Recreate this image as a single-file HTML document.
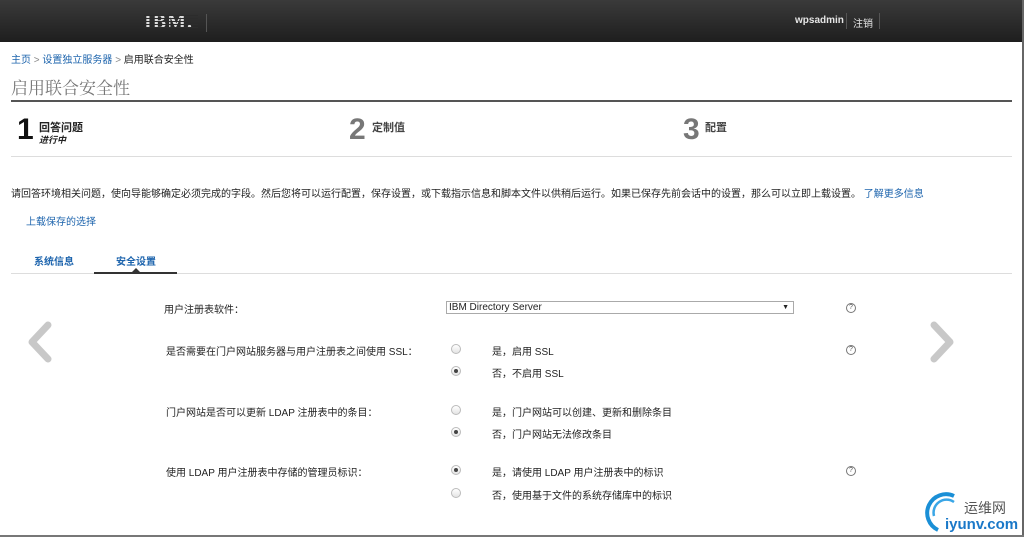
<!DOCTYPE html>
<html><head><meta charset="utf-8"><style>
*{margin:0;padding:0;box-sizing:border-box}
body{width:1028px;height:539px;background:#fff;font-family:"Liberation Sans","Noto Sans CJK SC",sans-serif;font-size:11px;color:#222;position:relative;overflow:hidden}
.a{position:absolute;white-space:nowrap}
.hdr{left:0;top:0;width:1022px;height:42px;background:linear-gradient(#3a3a3a,#1e1e1e)}
.blue{color:#1d64ad}
.radio{width:10px;height:10px;border-radius:50%;border:1px solid #bbb;background:linear-gradient(#fff,#e4e4e4)}
.radio.on::after{content:"";position:absolute;left:2px;top:2px;width:4px;height:4px;border-radius:50%;background:#444}
.help{width:10px;height:10px;border:1px solid #777;border-radius:50%;font-size:7px;line-height:8px;text-align:center;color:#555}
</style></head><body>
<div class="a hdr"></div>
<div class="a" style="left:144px;top:11px;font:bold 20px 'Liberation Serif',serif;color:#ddd;letter-spacing:1px">IBM.</div>
<div class="a" style="left:144px;top:13px;width:54px;height:17px;background:repeating-linear-gradient(transparent 0 2px,#2c2c2c 2px 3px)"></div>
<div class="a" style="left:206px;top:14px;width:1px;height:18px;background:#555"></div>
<div class="a" style="left:795px;top:15px;color:#e6e6e6;font-weight:bold;font-size:10px">wpsadmin</div>
<div class="a" style="left:846px;top:13px;width:1px;height:16px;background:#555"></div>
<div class="a" style="left:853px;top:15px;color:#e6e6e6;font-size:10px">注销</div>
<div class="a" style="left:879px;top:13px;width:1px;height:16px;background:#555"></div>
<div class="a" style="left:1022px;top:0;width:2px;height:537px;background:#666"></div>
<div class="a" style="left:0;top:535px;width:1024px;height:2px;background:#777"></div>

<div class="a" style="left:11px;top:51px;font-size:10px"><span class="blue">主页</span> <span style="color:#888">&gt;</span> <span class="blue">设置独立服务器</span> <span style="color:#888">&gt;</span> 启用联合安全性</div>
<div class="a" style="left:11px;top:74px;font:17px 'Noto Serif CJK SC',serif;color:#777">启用联合安全性</div>
<div class="a" style="left:11px;top:100px;width:1001px;height:2px;background:#555"></div>

<div class="a" style="left:17px;top:113px;font:bold 30px 'Liberation Sans',sans-serif;color:#111">1</div>
<div class="a" style="left:39px;top:119px;font-weight:bold">回答问题</div>
<div class="a" style="left:39px;top:133px;font-size:9px;font-style:italic;font-weight:bold">进行中</div>
<div class="a" style="left:349px;top:113px;font:bold 30px 'Liberation Sans',sans-serif;color:#777">2</div>
<div class="a" style="left:372px;top:119px;font-weight:bold;color:#444">定制值</div>
<div class="a" style="left:683px;top:113px;font:bold 30px 'Liberation Sans',sans-serif;color:#777">3</div>
<div class="a" style="left:705px;top:119px;font-weight:bold;color:#444">配置</div>
<div class="a" style="left:11px;top:156px;width:1001px;height:1px;background:#ddd"></div>

<div class="a" style="left:11px;top:185px;font-size:10px">请回答环境相关问题，使向导能够确定必须完成的字段。然后您将可以运行配置，保存设置，或下载指示信息和脚本文件以供稍后运行。如果已保存先前会话中的设置，那么可以立即上载设置。 <span class="blue">了解更多信息</span></div>
<div class="a blue" style="left:26px;top:213px;font-size:10px">上载保存的选择</div>

<div class="a blue" style="left:34px;top:253px;font-size:10px;font-weight:bold">系统信息</div>
<div class="a blue" style="left:116px;top:253px;font-size:10px;font-weight:bold">安全设置</div>
<div class="a" style="left:11px;top:273px;width:1001px;height:1px;background:#ddd"></div>
<div class="a" style="left:94px;top:272px;width:83px;height:2px;background:#333"></div>
<div class="a" style="left:132px;top:268px;border:4px solid transparent;border-bottom:4px solid #333;border-top:0"></div>

<svg class="a" style="left:24px;top:320px" width="30" height="44"><path d="M24 5 L8 22 L24 39" stroke="#c8c8c8" stroke-width="7" fill="none" stroke-linecap="round" stroke-linejoin="round"/></svg>
<svg class="a" style="left:926px;top:320px" width="34" height="44"><path d="M8 5 L24 22 L8 39" stroke="#c8c8c8" stroke-width="7" fill="none" stroke-linecap="round" stroke-linejoin="round"/></svg>

<div class="a" style="left:164px;top:301px;font-size:10px">用户注册表软件：</div>
<div class="a" style="left:446px;top:301px;width:348px;height:13px;border:1px solid #aaa;font-size:10px;line-height:11px;padding-left:2px">IBM Directory Server<span style="position:absolute;right:4px;font-size:7px">▼</span></div>
<div class="a help" style="left:846px;top:303px">?</div>

<div class="a" style="left:166px;top:343px;font-size:10px">是否需要在门户网站服务器与用户注册表之间使用 SSL：</div>
<div class="a radio" style="left:451px;top:344px"></div><div class="a" style="left:492px;top:343px;font-size:10px">是，启用 SSL</div>
<div class="a help" style="left:846px;top:345px">?</div>
<div class="a radio on" style="left:451px;top:366px"></div><div class="a" style="left:492px;top:365px;font-size:10px">否，不启用 SSL</div>

<div class="a" style="left:166px;top:404px;font-size:10px">门户网站是否可以更新 LDAP 注册表中的条目：</div>
<div class="a radio" style="left:451px;top:405px"></div><div class="a" style="left:492px;top:404px;font-size:10px">是，门户网站可以创建、更新和删除条目</div>
<div class="a radio on" style="left:451px;top:427px"></div><div class="a" style="left:492px;top:426px;font-size:10px">否，门户网站无法修改条目</div>

<div class="a" style="left:166px;top:464px;font-size:10px">使用 LDAP 用户注册表中存储的管理员标识：</div>
<div class="a radio on" style="left:451px;top:465px"></div><div class="a" style="left:492px;top:464px;font-size:10px">是，请使用 LDAP 用户注册表中的标识</div>
<div class="a help" style="left:846px;top:466px">?</div>
<div class="a radio" style="left:451px;top:488px"></div><div class="a" style="left:492px;top:487px;font-size:10px">否，使用基于文件的系统存储库中的标识</div>

<svg class="a" style="left:924px;top:490px" width="40" height="44"><path d="M30 6 A18 18 0 1 0 14 40" stroke="#1a8fd6" stroke-width="4" fill="none"/><path d="M30 12 A13 13 0 0 0 10 26" stroke="#3aa6e6" stroke-width="2.5" fill="none"/></svg>
<div class="a" style="left:964px;top:498px;font-size:14px;color:#555">运维网</div>
<div class="a" style="left:945px;top:516px;font:bold 15px 'Liberation Sans',sans-serif;color:#1a78c8">iyunv.com</div>
</body></html>
